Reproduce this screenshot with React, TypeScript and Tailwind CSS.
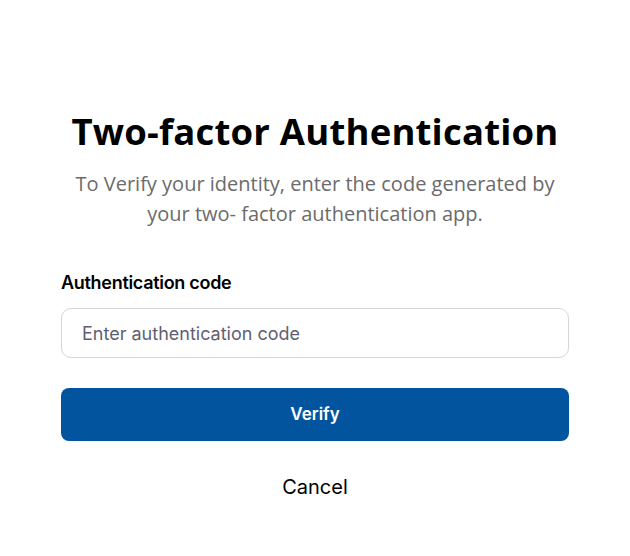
export default function App() {
  return (
    <div className="min-h-[556px] w-full bg-white flex flex-col items-center pt-[107px]">
      <h1 className="font-['Open_Sans',sans-serif] font-bold text-[36.5px] leading-[48px] text-black tracking-[0.2px]">
        Two-factor Authentication
      </h1>
      <p className="mt-[14px] w-[500px] text-center font-['Open_Sans',sans-serif] text-[20px] leading-[30px] text-[#6b6b6b]">
        To Verify your identity, enter the code generated by your two- factor authentication app.
      </p>
      <div className="mt-[41px] w-[508px] font-['Inter',sans-serif]">
        <label className="block text-[18px] leading-[26px] font-semibold text-black tracking-[-0.3px]">
          Authentication code
        </label>
        <input
          type="text"
          placeholder="Enter authentication code"
          className="mt-[12px] w-full h-[50px] rounded-[10px] border border-[#d6d6d6] px-[20px] text-[18px] placeholder:text-[#5f5f73] outline-none"
        />
        <button className="mt-[30px] w-full h-[53px] rounded-[8px] bg-[#02549f] text-white text-[17px] font-semibold">
          Verify
        </button>
        <div className="mt-[32px] text-center text-[20px] leading-[28px] text-black">Cancel</div>
      </div>
    </div>
  );
}
